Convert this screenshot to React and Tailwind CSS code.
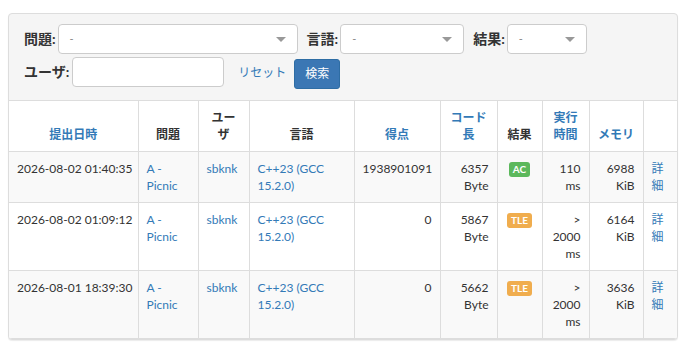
import React from 'react';

const FONT = { fontFamily: 'Lato, "Noto Sans CJK JP", sans-serif' };

// select2-like dropdown: placeholder dash and a small grey caret
function Dropdown({ width }) {
  return (
    <div
      className={`flex h-[30px] items-center justify-between rounded border border-[#ccc] bg-white pl-[11px] pr-[11px] ${width}`}
    >
      <span className="text-[11px] text-[#888]">-</span>
      <span className="h-0 w-0 border-x-[5px] border-t-[5px] border-x-transparent border-t-[#999]" />
    </div>
  );
}

function Badge({ children, tone }) {
  return (
    <span
      className={`inline-block rounded-[3px] px-[4px] text-[10px] font-bold leading-[15px] text-white ${tone}`}
    >
      {children}
    </span>
  );
}

const rows = [
  { date: '2026-08-02 01:40:35', score: '1938901091', len: '6357', res: 'AC', time: '110', mem: '6988', bg: 'bg-[#f9f9f9]' },
  { date: '2026-08-02 01:09:12', score: '0', len: '5867', res: 'TLE', time: '> 2000', mem: '6164', bg: 'bg-white' },
  { date: '2026-08-01 18:39:30', score: '0', len: '5662', res: 'TLE', time: '> 2000', mem: '3636', bg: 'bg-[#f9f9f9]' },
];

const cell = 'border border-[#ddd] p-2 first:border-l-0 last:border-r-0';
const link = 'text-[#337ab7]';

export default function App() {
  return (
    <div className="min-h-screen bg-white px-2 pt-[13px] text-[#333]" style={FONT}>
      <div className="overflow-hidden rounded border border-[#ddd] bg-[#f5f5f5] shadow-[0_1px_1px_rgba(0,0,0,0.08)]">
        <div className="flex flex-col gap-[3px] px-[15px] pb-[11px] pt-[10px]">
          <div className="flex items-center">
            <label className="mr-[2px] text-sm font-bold">問題:</label>
            <Dropdown width="w-[240px]" />
            <label className="ml-[9px] mr-[2px] text-sm font-bold">言語:</label>
            <Dropdown width="w-[124px]" />
            <label className="ml-[9px] mr-[2px] text-sm font-bold">結果:</label>
            <Dropdown width="w-[80px]" />
          </div>
          <div className="flex items-start">
            <label className="mr-[3px] mt-[5px] text-sm font-bold leading-5">ユーザ:</label>
            <input className="h-[30px] w-[152px] rounded border border-[#ccc] bg-white" />
            <a className="ml-[14px] mt-[7px] text-xs leading-[17px] text-[#337ab7]">リセット</a>
            <button className="ml-[8px] mt-[2px] h-[30px] rounded-[3px] border border-[#2e6da4] bg-[#3b77b4] px-[10px] text-xs text-white">
              検索
            </button>
          </div>
        </div>
        <table className="w-full table-fixed border-collapse text-xs leading-[17px]">
          <thead className="bg-white">
            <tr className="align-bottom font-bold">
              <th className={`${cell} w-[129px] text-center ${link}`}>提出日時</th>
              <th className={`${cell} w-[60px] text-center`}>問題</th>
              <th className={`${cell} w-[51px] text-center`}>ユーザ</th>
              <th className={`${cell} w-[105px] text-center`}>言語</th>
              <th className={`${cell} w-[86px] text-center ${link}`}>得点</th>
              <th className={`${cell} w-[57px] text-center ${link}`}>コード長</th>
              <th className={`${cell} w-[45px] text-center`}>結果</th>
              <th className={`${cell} w-[47px] text-center ${link}`}>実行時間</th>
              <th className={`${cell} w-[54px] text-center ${link}`}>メモリ</th>
              <th className={cell}></th>
            </tr>
          </thead>
          <tbody>
            {rows.map((r) => (
              <tr key={r.date} className={`${r.bg} align-top`}>
                <td className={`${cell} whitespace-nowrap`}>{r.date}</td>
                <td className={`${cell} ${link}`}>A - Picnic</td>
                <td className={`${cell} ${link}`}>sbknk</td>
                <td className={`${cell} ${link}`}>C++23 (GCC 15.2.0)</td>
                <td className={`${cell} text-right`}>{r.score}</td>
                <td className={`${cell} text-right`}>
                  {r.len} Byte
                </td>
                <td className={`${cell} text-center`}>
                  {r.res === 'AC' ? (
                    <Badge tone="bg-[#5cb85c]">AC</Badge>
                  ) : (
                    <Badge tone="bg-[#f0ad4e]">TLE</Badge>
                  )}
                </td>
                <td className={`${cell} text-right`}>{r.time} ms</td>
                <td className={`${cell} text-right`}>{r.mem} KiB</td>
                <td className={`${cell} ${link}`}>詳細</td>
              </tr>
            ))}
          </tbody>
        </table>
      </div>
    </div>
  );
}
